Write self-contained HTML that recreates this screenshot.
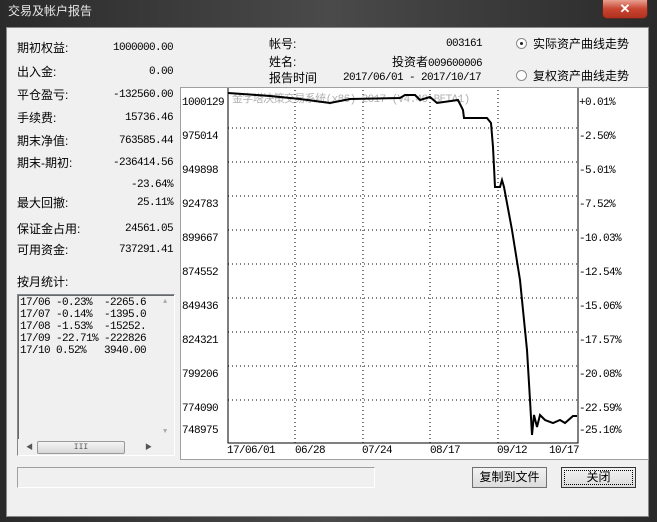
<!DOCTYPE html>
<html><head><meta charset="utf-8"><style>
*{margin:0;padding:0;box-sizing:border-box}
body{width:657px;height:522px;overflow:hidden;background:linear-gradient(90deg,#2a2a2a,#4a4a4a 50%,#2a2a2a);position:relative;font-family:"Liberation Mono","Noto Sans CJK SC",monospace;font-size:12px;color:#000}
.a{position:absolute;white-space:nowrap}
.cj{font-family:"Liberation Sans","Noto Sans CJK SC",sans-serif;font-size:12px;line-height:14px}
.m{font-family:"Liberation Mono",monospace;font-size:11px;letter-spacing:-0.6px;line-height:14px}
#title{left:8px;top:4px;color:#e8e8e8;font-size:12px}
#close{left:602px;top:0;width:46px;height:19px;background:linear-gradient(#e8a090,#c84530 50%,#b03020);border:1px solid #5a2a20;border-top:none;border-radius:0 0 5px 5px;color:#fff;text-align:center;font-weight:bold;font-size:13px;line-height:17px;font-family:"Liberation Sans",sans-serif}
#client{left:6px;top:27px;width:643px;height:490px;background:#f0f0f0;border:1px solid #888}
.r{text-align:right}
.radio{width:11px;height:11px;border:1px solid #8a8a8a;border-radius:50%;background:#fff}
.btn{border:1px solid #707070;background:linear-gradient(#f2f2f2,#dcdcdc);text-align:center;line-height:19px}
</style></head><body>
<div class="a cj" id="title">交易及帐户报告</div>
<div class="a" id="close">✕</div>
<div class="a" id="client"></div>

<div class="a cj" style="left:17px;top:41px">期初权益:</div><div class="a m r" style="left:90px;top:41px;width:83px">1000000.00</div>
<div class="a cj" style="left:17px;top:65px">出入金:</div><div class="a m r" style="left:90px;top:65px;width:83px">0.00</div>
<div class="a cj" style="left:17px;top:88px">平仓盈亏:</div><div class="a m r" style="left:90px;top:88px;width:83px">-132560.00</div>
<div class="a cj" style="left:17px;top:111px">手续费:</div><div class="a m r" style="left:90px;top:111px;width:83px">15736.46</div>
<div class="a cj" style="left:17px;top:134px">期末净值:</div><div class="a m r" style="left:90px;top:134px;width:83px">763585.44</div>
<div class="a cj" style="left:17px;top:156px">期末-期初:</div><div class="a m r" style="left:90px;top:156px;width:83px">-236414.56</div>
<div class="a m r" style="left:90px;top:178px;width:83px">-23.64%</div>
<div class="a cj" style="left:17px;top:196px">最大回撤:</div><div class="a m r" style="left:90px;top:196px;width:83px">25.11%</div>
<div class="a cj" style="left:17px;top:222px">保证金占用:</div><div class="a m r" style="left:90px;top:222px;width:83px">24561.05</div>
<div class="a cj" style="left:17px;top:243px">可用资金:</div><div class="a m r" style="left:90px;top:243px;width:83px">737291.41</div>
<div class="a cj" style="left:17px;top:275px">按月统计:</div>

<div class="a" style="left:17px;top:294px;width:158px;height:162px;border:1px solid #828790;background:#f0f0f0;border-right-color:#fff;border-bottom-color:#fff;box-shadow:inset 1px 1px 0 #696969"></div>
<div class="a m" style="left:20px;top:297px;line-height:12px;white-space:pre;width:137px;height:62px;overflow:hidden">17/06 -0.23%  -2265.6
17/07 -0.14%  -1395.0
17/08 -1.53%  -15252.
17/09 -22.71% -222826
17/10 0.52%   3940.00</div>
<div class="a" style="left:158px;top:296px;width:16px;height:143px;background:#f0f0f0"></div>
<div class="a" style="left:163px;top:298px;color:#aaa;font-size:7px">▲</div>
<div class="a" style="left:163px;top:428px;color:#aaa;font-size:7px">▼</div>
<div class="a" style="left:18px;top:439px;width:156px;height:16px;background:#f0f0f0"></div>
<div class="a" style="left:26px;top:442px;font-size:7px;color:#555">◀</div>
<div class="a" style="left:145px;top:442px;font-size:7px;color:#555">▶</div>
<div class="a" style="left:37px;top:441px;width:88px;height:13px;border:1px solid #999;border-radius:2px;background:linear-gradient(#f4f4f4,#d8d8d8);font-size:8px;text-align:center;line-height:11px;color:#555">III</div>

<div class="a cj" style="left:269px;top:37px">帐号:</div><div class="a m r" style="left:380px;top:37px;width:102px">003161</div>
<div class="a cj" style="left:269px;top:55px">姓名:</div><div class="a cj r" style="left:360px;top:55px;width:122px">投资者<span class="m">009600006</span></div>
<div class="a cj" style="left:269px;top:71px">报告时间</div><div class="a m" style="left:343px;top:71px">2017/06/01 - 2017/10/17</div>
<div class="a radio" style="left:516px;top:38px"><div style="width:3px;height:3px;background:#222;border-radius:50%;margin:3px"></div></div>
<div class="a cj" style="left:533px;top:37px">实际资产曲线走势</div>
<div class="a radio" style="left:516px;top:70px"></div>
<div class="a cj" style="left:533px;top:69px">复权资产曲线走势</div>

<div class="a" style="left:180px;top:87px;width:469px;height:373px;background:#fff;border:1px solid #a0a0a0"></div>
<svg class="a" style="left:0;top:0" width="657" height="522">
<g stroke="#000" stroke-width="1" stroke-dasharray="1,3" fill="none">
<path d="M228 128H578M228 162H578M228 196H578M228 230H578M228 264H578M228 298H578M228 332H578M228 366H578M228 400H578"/>
<path d="M295 90V443M363 90V443M430 90V443M498 90V443"/>
</g>
<path d="M228 88V443H578V88" stroke="#000" fill="none"/>
<text x="232" y="102" font-family="Liberation Mono,Noto Sans CJK SC,monospace" font-size="11" letter-spacing="-0.6" fill="#b0b0b0">金字塔决策交易系统(x86) 2017 (V4.40 BETA1)</text>
<path d="M228 93L270 96L300 99L330 103L350 99L400 98L405 95L415 95L420 100L430 97L437 103L458 100L463 110L464 118L487 118L491 123L493 147L495 187L500 187L502 180L504 187L512 230L520 280L527 350L530 400L532 435L534 415L537 427L540 415L545 420L553 423L560 420L565 423L573 416L577 416" stroke="#000" stroke-width="2" fill="none"/>
</svg>
<div class="a m" style="left:182px;top:86px;line-height:34px">1000129<br>975014<br>949898<br>924783<br>899667<br>874552<br>849436<br>824321<br>799206<br>774090</div>
<div class="a m" style="left:182px;top:424px">748975</div>
<div class="a m" style="left:579px;top:86px;line-height:34px">+0.01%<br>-2.50%<br>-5.01%<br>-7.52%<br>-10.03%<br>-12.54%<br>-15.06%<br>-17.57%<br>-20.08%<br>-22.59%</div>
<div class="a m" style="left:579px;top:424px">-25.10%</div>
<div class="a m" style="left:227px;top:444px">17/06/01</div>
<div class="a m" style="left:295px;top:444px">06/28</div>
<div class="a m" style="left:362px;top:444px">07/24</div>
<div class="a m" style="left:430px;top:444px">08/17</div>
<div class="a m" style="left:497px;top:444px">09/12</div>
<div class="a m" style="left:549px;top:444px">10/17</div>

<div class="a" style="left:17px;top:467px;width:358px;height:21px;border:1px solid #a0a0a0;border-right-color:#fff;border-bottom-color:#fff"></div>
<div class="a btn cj" style="left:472px;top:467px;width:75px;height:21px;line-height:19px">复制到文件</div>
<div class="a btn cj" style="left:561px;top:467px;width:75px;height:21px;border:1px solid #333"><div style="margin:2px;border:1px dotted #000;line-height:13px">关闭</div></div>
</body></html>
